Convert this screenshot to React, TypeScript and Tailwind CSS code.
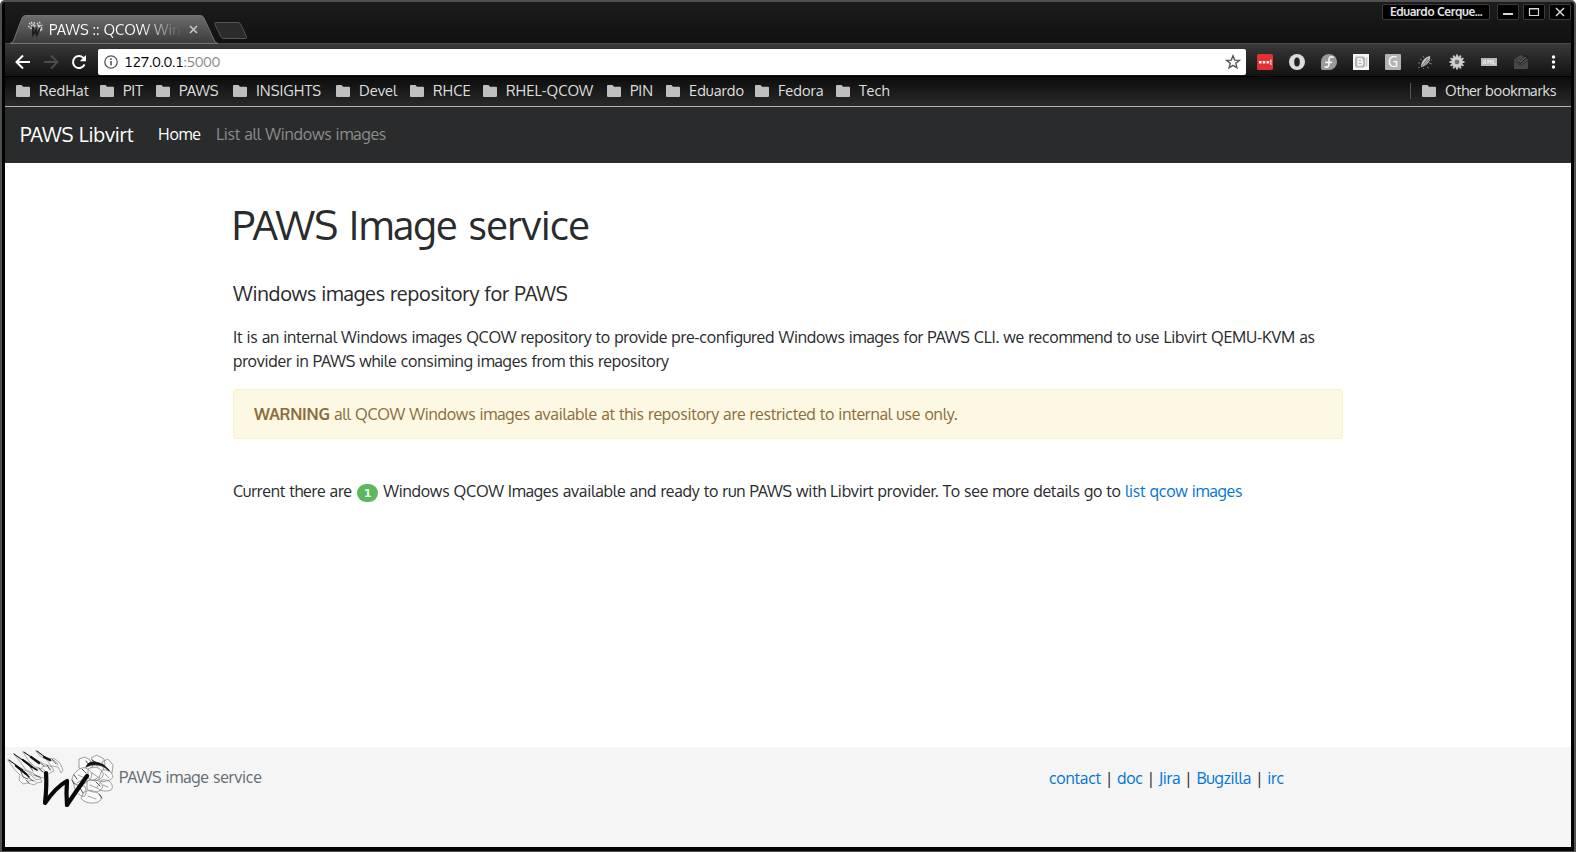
import React from "react";

const bookmarks: { label: string; width: string }[] = [
  { label: "RedHat", width: "w-[84px]" },
  { label: "PIT", width: "w-[56px]" },
  { label: "PAWS", width: "w-[77px]" },
  { label: "INSIGHTS", width: "w-[103px]" },
  { label: "Devel", width: "w-[74px]" },
  { label: "RHCE", width: "w-[73px]" },
  { label: "RHEL-QCOW", width: "w-[124px]" },
  { label: "PIN", width: "w-[59px]" },
  { label: "Eduardo", width: "w-[89px]" },
  { label: "Fedora", width: "w-[81px]" },
  { label: "Tech", width: "w-[70px]" },
];

function Folder() {
  return (
    <svg width="14" height="12" viewBox="0 0 14 12" className="shrink-0">
      <path d="M1 0h4.5L7 1.8h6a1 1 0 0 1 1 1V11a1 1 0 0 1-1 1H1a1 1 0 0 1-1-1V1a1 1 0 0 1 1-1z" fill="#bfbfbf" />
    </svg>
  );
}

function Bookmark({ label, width }: { label: string; width: string }) {
  return (
    <div className={`flex shrink-0 items-center gap-[9px] whitespace-nowrap ${width}`}>
      <Folder />
      <span className="pb-px">{label}</span>
    </div>
  );
}

function WindowButton({ children }: { children: React.ReactNode }) {
  return (
    <div className="flex h-4 w-[22px] items-center justify-center rounded-[2px] border border-[#3c3c3c] bg-black">
      <svg width="12" height="12" viewBox="0 0 12 12" fill="none" stroke="#d8d8d0">
        {children}
      </svg>
    </div>
  );
}

function TabStrip() {
  return (
    <div className="flex h-[41px] items-start justify-between bg-linear-to-b from-[#1c1c1c] to-[#111]">
      <div className="flex">
        <div className="relative ml-[5px] mt-[13px] h-7 w-[208px]">
          <svg className="absolute inset-0" width="208" height="29" viewBox="0 0 208 29">
            <defs>
              <linearGradient id="tab" x1="0" y1="0" x2="0" y2="1">
                <stop offset="0" stopColor="#6c6c6c" />
                <stop offset="1" stopColor="#3b3b3b" />
              </linearGradient>
            </defs>
            <path d="M0 28.500L3 27 12 3Q13 .5 15.500 .5H190.500q2.500 0 3.500 2.500L205 27l3 1.500z" fill="url(#tab)" stroke="#747474" strokeWidth="1" />
          </svg>
          <div className="relative flex h-7 items-center pl-[18px]">
            <svg width="16" height="16" viewBox="0 0 16 16" fill="none" className="shrink-0">
              <path d="M1 2l4 4M3 1l4 5M0 5l4 3M6 1l1 4M11 1l2 2M12 5l3-1M12 8l3 1M10 4l2 6M14 6l-2 5M9 2l3 4" stroke="#d8d8d8" strokeWidth="1.300" strokeDasharray="2 .7" />
              <path d="M5 6v8l3-5 .5 6L12 7" stroke="#161616" strokeWidth="1.500" />
            </svg>
            <div className="ml-[5px] w-[133px] whitespace-nowrap bg-linear-to-r from-white from-70% to-[#555] bg-clip-text text-[14.67px] leading-5 tracking-[0.05px] text-transparent">
              PAWS :: QCOW Win
            </div>
            <svg width="9" height="9" viewBox="0 0 9 9" className="ml-[7px] shrink-0" stroke="#c4c4c4" strokeWidth="1.700">
              <path d="M1 1l7 7M8 1L1 8" />
            </svg>
          </div>
        </div>
        <svg width="36" height="18" viewBox="0 0 36 18" className="-ml-[5px] mt-5">
          <path d="M3.500.5H25q2 0 2.800 2L33.500 14.500q.8 2-1.500 2H11q-2.500 0-3.500-2.500L2 2.500Q1 .5 3.500.5z" fill="#2b2b2b" stroke="#555" />
        </svg>
      </div>
      <div className="mt-[2px] flex gap-1">
        <div className="mr-[3px] h-4 w-[108px] whitespace-nowrap rounded-[2px] border border-[#3c3c3c] bg-black text-center text-[12px] font-bold leading-[14px] tracking-[-0.03em] text-[#e2e2e2]">
          Eduardo Cerque...
        </div>
        <WindowButton>
          <path d="M1 8h10" strokeWidth="2" />
        </WindowButton>
        <WindowButton>
          <path d="M1.500 2.500h9v7h-9zM1.500 3h9" strokeWidth="1.200" />
        </WindowButton>
        <WindowButton>
          <path d="M2 2l8 8M10 2l-8 8" strokeWidth="1.500" />
        </WindowButton>
      </div>
    </div>
  );
}

function ExtensionIcons() {
  const spokes = [0, 30, 60, 90, 120, 150];
  return (
    <div className="flex items-center gap-4">
      <svg width="16" height="16" viewBox="0 0 16 16">
        <rect width="16" height="16" rx="1.500" fill="#e03133" />
        <path d="M2 7h2.500v2.500H2zM5.800 7h2.500v2.500H5.800zM9.600 7h2.500v2.500H9.600zM13.400 5.500h1v5.500h-1z" fill="#fff" />
      </svg>
      <svg width="16" height="16" viewBox="0 0 16 16">
        <circle cx="8" cy="8" r="8" fill="#dcdcdc" />
        <ellipse cx="8" cy="8" rx="2.800" ry="4.600" fill="#222" />
      </svg>
      <svg width="16" height="16" viewBox="0 0 16 16">
        <path d="M8 0a8 8 0 1 1 0 16H1.500Q0 16 0 14V8a8 8 0 0 1 8-8z" fill="#999" />
        <path d="M12 3.300C9.800 2 8 3.200 8 5.500v4.700c0 2.300-2 3.400-4 2.600M4.800 8.300h5.700" fill="none" stroke="#f4f4f4" strokeWidth="1.700" strokeLinecap="round" />
      </svg>
      <svg width="16" height="16" viewBox="0 0 16 16">
        <path d="M0 0h16v16H0z" fill="#f5f5f5" />
        <rect x="2" y="2.500" width="10" height="11" rx="2" fill="#b5b5b5" />
        <path d="M13.500 3.500v9" stroke="#c4c4c4" strokeWidth="1.500" />
        <path d="M5 5h2.800q1.500.2 1.500 1.500T7.800 8q1.800.2 1.800 1.600T7.800 11H5zM5 8h3" fill="none" stroke="#fff" strokeWidth="1.300" />
      </svg>
      <div className="flex size-4 items-center justify-center rounded-[1px] bg-[#b3b3b3] text-[14px] leading-4 text-white">G</div>
      <svg width="16" height="16" viewBox="0 0 16 16">
        <path d="M4 13C4 7 8 3 13 2c1 5-3 10-9 11z" fill="#c4c4c4" />
        <path d="M5 12l6-8M7.500 11.500l4.500-6" stroke="#444" strokeWidth=".7" />
        <path d="M3 5l2 1M6 2l1 2M1 9h2M1 14l2-1M6 15l1-1M10 13l2 1M12 9l3 1M14 6h1" stroke="#777" />
      </svg>
      <svg width="16" height="16" viewBox="0 0 16 16">
        {spokes.map((a) => (
          <path key={a} d="M8 .5v15" stroke="#c9c9c9" strokeWidth="1.900" transform={`rotate(${a} 8 8)`} />
        ))}
        <circle cx="8" cy="8" r="5.800" fill="#cecece" />
        <circle cx="8" cy="8" r="2.300" fill="#707070" />
      </svg>
      <svg width="16" height="16" viewBox="0 0 16 16">
        <path d="M0 4h16v8H0z" fill="#bababa" />
        <path d="M2 6l3 4M5 6l-3 4M7 10V6l1.500 2L10 6v4M12 6v4h2.500" fill="none" stroke="#f4f4f4" />
      </svg>
      <svg width="16" height="16" viewBox="0 0 16 16">
        <path d="M1 5.500L7.500 1 15 5.500V14q0 1-1 1H2q-1 0-1-1z" fill="#484848" />
        <path d="M1 7l7 4.500L15 7" stroke="#303030" fill="none" />
        <path d="M5 5.500l2.500 2.800L14 2" stroke="#171717" strokeWidth="2.500" fill="none" />
        <path d="M5 5.500l2.500 2.500L13 3" stroke="#666" strokeWidth="1.200" fill="none" />
      </svg>
      <svg width="16" height="16" viewBox="0 0 16 16" fill="#fff">
        <circle cx="8.500" cy="3" r="1.700" />
        <circle cx="8.500" cy="8" r="1.700" />
        <circle cx="8.500" cy="13" r="1.700" />
      </svg>
    </div>
  );
}

function Toolbar() {
  return (
    <div className="flex h-[33px] items-start border-t border-[#4b4b4b] bg-linear-to-b from-[#393939] to-[#131313] pl-[10px]">
      <div className="mt-[10px] flex w-[83px] items-center gap-3">
        <svg width="16" height="16" viewBox="0 0 16 16" fill="none" stroke="#fff" strokeWidth="2">
          <path d="M15 8H2M8 1.500L1.500 8 8 14.500" />
        </svg>
        <svg width="16" height="16" viewBox="0 0 16 16" fill="none" stroke="#4c4c4c" strokeWidth="2">
          <path d="M1 8h13M8 1.500L14.500 8 8 14.500" />
        </svg>
        <svg width="16" height="16" viewBox="0 0 16 16" fill="none">
          <path d="M13.500 10.500A6 6 0 1 1 12.200 3.800L14 5.600" stroke="#fff" strokeWidth="2" />
          <path d="M15 1v6.200H8.800z" fill="#fff" />
        </svg>
      </div>
      <div className="mt-[5px] flex h-[26px] w-[1148px] items-center rounded-[2px] bg-white pl-[6px] pr-[5px] text-[14px] text-black">
        <svg width="14" height="14" viewBox="0 0 14 14" fill="none" stroke="#555">
          <circle cx="7" cy="7" r="6.200" strokeWidth="1.300" />
          <path d="M7 6v4.500M7 3.300v1.600" strokeWidth="1.600" />
        </svg>
        <span className="ml-[6px] grow font-['Cantarell','Noto_Sans',sans-serif] leading-5 tracking-[-0.045em]">
          127.0.0.1<span className="text-[#888]">:5000</span>
        </span>
        <svg width="16" height="16" viewBox="0 0 16 16" fill="none" stroke="#555" strokeWidth="1.400">
          <path d="M8 1.800l1.700 4.300 4.600.3-3.500 2.900 1.100 4.500L8 11.300l-3.900 2.500 1.100-4.500L1.700 6.400l4.600-.3z" />
        </svg>
      </div>
      <div className="ml-[11px] mt-[10px]">
        <ExtensionIcons />
      </div>
    </div>
  );
}

function BookmarkBar() {
  return (
    <div className="flex h-[31px] items-center border-b border-t border-b-[#b4b4b4] border-t-black bg-linear-to-b from-[#0d0d0d] to-[#2a2a2a] pb-[2px] pl-[11px] text-[14.67px] leading-5 text-[#dedede]">
      {bookmarks.map((b) => (
        <Bookmark key={b.label} {...b} />
      ))}
      <div className="grow" />
      <div className="mr-[11px] h-4 w-px bg-[#555]" />
      <div className="tracking-[-0.25px]">
        <Bookmark label="Other bookmarks" width="w-[149px]" />
      </div>
    </div>
  );
}

function PawsLogo() {
  return (
    <svg width="112" height="64" viewBox="0 0 112 64" fill="none" strokeLinecap="round" strokeLinejoin="round" className="-ml-px shrink-0">
      <g fill="#f7f7f7" stroke="#777" strokeWidth=".6">
        <path d="M4 13l14 9 5 2 6 4 7 3 2 4-5 1-3 2-6-2-5 1-4-4 1-5-5-5z" />
        <path d="M10 7l13 8 8 4 6 5 5 2-1 5-7-1-5-4-7-3-5-7z" />
        <path d="M19 5l12 7 9 5 8 3 2 4-6 3-5-5-8-2-6-6z" />
        <path d="M32 4l10 7 9 1 5 4 3 7-2 3-3-6-7-1-4-6-7-4z" />
        <path d="M20 28q5-3 9 2t8 1M24 35q4-4 8 0M38 20q6-3 9 3M46 14q5-3 8 4" />
        <path d="M25 31l4 3M31 28l5 2M35 21l4 4M43 18l3 5M48 12l4 5M22 33l3 3M16 22l3 8 5 2M24 17l5 7M34 14l6 5" stroke="#444" strokeWidth=".8" />
      </g>
      <g stroke="#111">
        <path d="M5 13l14 10M10 7l15 11M20 5l14 10M33 4l12 9" strokeWidth="1" />
        <path d="M12 19l10 8M19 13l9 7M27 10l8 6M40 10l6 3" strokeWidth="2.200" />
        <path d="M20 25l5 5M28 20l5 3" strokeWidth="1.600" />
      </g>
      <g fill="#f9f9f9" stroke="#777" strokeWidth=".7" strokeDasharray="3 .8">
        <path d="M75 12l6-2 5 3 3 6-6 5-8-3zM87 11l6-3 7 4 1 6-8 1zM98 15l6-3 5 6-1 8-8-2z" />
        <path d="M73 24q6-6 12-1t-1 11-11 4-5-6q1-5 5-8zM84 22q8-4 13 1t-1 9-12-1zM98 23q7-1 10 4t-5 7-8-3zM70 36q6 4 9 3t3 6-6 3-6-12zM83 34q10-3 14 2t-2 8-12-2zM98 33q8-1 10 5t-6 6-9-4zM80 45q6-3 12 0t5 7-9 4-11-5z" />
        <path d="M74 28l7 3M88 26l6 4M101 27l4 4M86 38l7 3M99 38l5 2M84 49l8 3M73 36l6-4M90 33l5-3" />
        <path d="M70 28l3 4M78 22l4 4M92 35l4 4M95 47l3 4M76 41l3 5M103 21l3 3M82 14l3 4M88 13l5 3M68 33l2 4" stroke="#444" strokeWidth="1" />
      </g>
      <path d="M82 20q2-6 9-5 10 1 14 9-5-5-10-6-7-1-13 2z" fill="#111" stroke="#111" strokeWidth=".6" />
      <path d="M42 26q1 12-1 30 11-16 22-22-1 12 0 24 10-15 20-29" stroke="#080808" strokeWidth="4.200" />
    </svg>
  );
}

function FooterLinks() {
  const links = ["contact", "doc", "Jira", "Bugzilla", "irc"];
  return (
    <div className="flex gap-[5px] text-[#292b2c]">
      {links.map((l, i) => (
        <React.Fragment key={l}>
          {i > 0 && <span>|</span>}
          <a className="text-[#0275d8]">{l}</a>
        </React.Fragment>
      ))}
    </div>
  );
}

export default function App() {
  return (
    <div className="h-[852px] w-[1576px] overflow-hidden bg-white">
      <div className="flex h-full flex-col rounded-t-[5px] border-b border-l-2 border-r-2 border-t-2 border-[#505050] bg-black pb-[4px] pl-[3px] pr-[3px] font-['Oxygen','Noto_Sans',sans-serif]">
        <TabStrip />
        <Toolbar />
        <BookmarkBar />
        <div className="flex min-h-0 grow flex-col bg-white text-[16px] leading-6 tracking-[-0.22px] text-[#292b2c] [word-spacing:0.4px]">
          <nav className="flex h-14 shrink-0 items-center bg-[#292b2c] pb-[2px] pl-[15px]">
            <span className="w-[138px] whitespace-nowrap text-xl tracking-[-0.16px] text-white">PAWS Libvirt</span>
            <span className="w-[58px] text-white">Home</span>
            <span className="text-[#8b8c8d]">List all Windows images</span>
          </nav>
          <main className="flex w-[1338px] grow flex-col pl-[228px]">
            <h1 className="mt-[39px] -ml-px text-[40px] leading-[44px] tracking-[-0.65px] [word-spacing:2px]">PAWS Image service</h1>
            <h2 className="mt-[36px] text-[20px] leading-[22px]">Windows images repository for PAWS</h2>
            <p className="mt-[21px] whitespace-nowrap">
              It is an internal Windows images QCOW repository to provide pre-configured Windows images for PAWS CLI. we recommend to use Libvirt QEMU-KVM as
              <br />
              provider in PAWS while consiming images from this repository
            </p>
            <div className="mt-[16px] rounded-[4px] border border-[#faf2cc] bg-[#fcf8e3] px-5 py-3 text-[#8a6d3b]">
              <strong>WARNING</strong> all QCOW Windows images available at this repository are restricted to internal use only.
            </div>
            <p className="mt-[40px] whitespace-nowrap">
              Current there are{" "}
              <span className="mx-px inline-block h-[18px] w-[21px] rounded-full bg-[#5cb85c] text-center font-['Cantarell','Noto_Sans',sans-serif] text-xs font-bold leading-[18px] text-white">1</span>{" "}
              Windows QCOW Images available and ready to run PAWS with Libvirt provider. To see more details go to{" "}
              <a className="text-[#0275d8]">list qcow images</a>
            </p>
          </main>
          <footer className="flex h-[100px] shrink-0 bg-[#f5f5f5]">
            <PawsLogo />
            <span className="ml-[3px] mt-[18px] w-[930px] text-[#636c72]">PAWS image service</span>
            <div className="mt-[19px]">
              <FooterLinks />
            </div>
          </footer>
        </div>
      </div>
    </div>
  );
}
